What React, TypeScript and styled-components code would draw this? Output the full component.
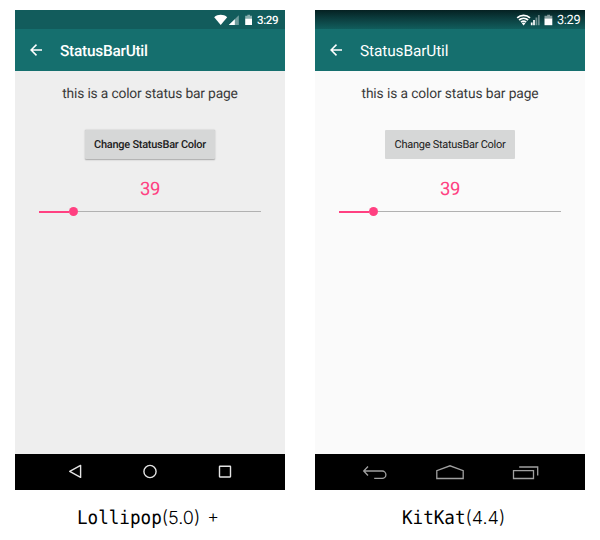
import React from "react";
import styled, { createGlobalStyle, css } from "styled-components";

type Version = "lollipop" | "kitkat";

const GlobalStyle = createGlobalStyle`
  * { box-sizing: border-box; }
  body { margin: 0; background: #fff; text-rendering: geometricPrecision; }
`;

const Page = styled.main`
  width: 600px;
  height: 540px;
  padding: 10px 15px 0;
  display: grid;
  grid-template-columns: 270px 270px;
  column-gap: 30px;
  align-content: start;
  font-family: Roboto, "Liberation Sans", sans-serif;
`;

const Figure = styled.figure`
  margin: 0;
  display: flex;
  flex-direction: column;
`;

const Screen = styled.div<{ $version: Version }>`
  height: 480px;
  display: flex;
  flex-direction: column;
  background: ${(p) => (p.$version === "lollipop" ? "#eeeeee" : "#fafafa")};
`;

const StatusBar = styled.div<{ $version: Version }>`
  height: 19px;
  display: flex;
  align-items: center;
  justify-content: flex-end;
  padding-right: ${(p) => (p.$version === "lollipop" ? 6 : 4)}px;
  color: #fff;
  ${(p) =>
    p.$version === "lollipop"
      ? css`
          background: #125c5c;
        `
      : css`
          background: linear-gradient(#052122, #0b3d3e 45%, #115d5c);
        `}
`;

const Clock = styled.time<{ $version: Version }>`
  width: ${(p) => (p.$version === "lollipop" ? 22 : 24)}px;
  font-size: ${(p) => (p.$version === "lollipop" ? 11.5 : 12.8)}px;
  line-height: 19px;
  letter-spacing: -0.35px;
  font-weight: ${(p) => (p.$version === "lollipop" ? 500 : 400)};
  white-space: nowrap;
  padding-top: ${(p) => (p.$version === "lollipop" ? 1 : 2)}px;
`;

const StatusIcons = styled.svg`
  display: block;
  width: 44px;
  height: 19px;
`;

const AppBar = styled.header`
  height: 42px;
  display: flex;
  align-items: center;
  padding-left: 14px;
  background: #156f6e;
  color: #fff;
`;

const BackArrow = styled.svg`
  width: 14px;
  height: 14px;
  margin-right: 17px;
`;

const Title = styled.h1<{ $version: Version }>`
  margin: 0;
  padding-top: 1px;
  font-size: 15.4px;
  line-height: 20px;
  letter-spacing: ${(p) => (p.$version === "lollipop" ? -0.24 : -0.1)}px;
  font-weight: ${(p) => (p.$version === "lollipop" ? 500 : 400)};
`;

const Content = styled.section`
  flex: 1;
  display: flex;
  flex-direction: column;
  align-items: center;
  padding-top: 13px;
`;

const Message = styled.p<{ $version: Version }>`
  margin: 0;
  font-size: 13.8px;
  line-height: 20px;
  color: #3a3a3a;
  letter-spacing: ${(p) => (p.$version === "lollipop" ? -0.17 : -0.12)}px;
`;

const Button = styled.button<{ $version: Version }>`
  margin: 26px 0 0;
  padding: 0;
  border: 0;
  width: 130px;
  height: 29px;
  background: #d6d7d7;
  font: 500 11px/30px Roboto, sans-serif;
  letter-spacing: -0.27px;
  text-rendering: geometricPrecision;
  color: #212121;
  border-radius: 1px;
  ${(p) =>
    p.$version === "lollipop"
      ? css`
          box-shadow: 0 0.5px 1.5px rgba(0, 0, 0, 0.3);
        `
      : css`
          font-weight: 400;
        `}
`;

const Value = styled.output`
  margin-top: 20px;
  font-size: 18.5px;
  line-height: 21px;
  letter-spacing: -0.4px;
  color: #ff4081;
`;

const Slider = styled.div`
  width: 222px;
  height: 9px;
  margin-top: 7px;
  display: flex;
  align-items: center;
`;

const Progress = styled.div`
  width: 29.5px;
  height: 2px;
  background: #ff4081;
`;

const Thumb = styled.div`
  width: 9px;
  height: 9px;
  border-radius: 50%;
  background: #ff4081;
`;

const Track = styled.div`
  flex: 1;
  height: 1px;
  background: #b1b1b1;
`;

const NavBar = styled.nav`
  height: 36px;
  background: #000;
`;

const NavIcons = styled.svg`
  display: block;
  width: 270px;
  height: 36px;
`;

const Caption = styled.figcaption<{ $version: Version }>`
  display: flex;
  align-items: baseline;
  margin-top: 16px;
  padding-left: ${(p) => (p.$version === "lollipop" ? 62 : 87)}px;
  color: #000;
  line-height: 26px;
  white-space: pre;
`;

const Name = styled.span`
  display: inline-block;
  font: 17.6px/26px "DejaVu Sans Mono", monospace;
  transform: scaleY(1.07);
  transform-origin: 50% 72%;
`;

const Release = styled.span`
  font: 300 18px/26px Inter, "Noto Sans", sans-serif;
  word-spacing: 2px;
`;

const StatusGlyphs = ({ version }: { version: Version }) =>
  version === "lollipop" ? (
    <StatusIcons viewBox="0 0 44 19" fill="#fff">
      <path d="M1.2 7.2C4.8 4 10.6 4 14.2 7.2L7.7 15Z" />
      <path d="M25.8 5.2V15H15.8Z" opacity=".4" />
      <path d="M21.8 9.2V15H15.8Z" />
      <path d="M34.4 4.8h2.6v1h2v3H32.2v-3h2.2Z" opacity=".5" />
      <path d="M32.2 8.6H39V15h-6.8Z" />
    </StatusIcons>
  ) : (
    <StatusIcons viewBox="0 0 44 19" fill="none" stroke="#fff">
      <path d="M4.2 7.8C7.8 4.5 13.4 4.5 17 7.8M6.1 10C8.7 7.7 12.5 7.7 15.1 10M8 12.1C9.6 10.9 11.6 10.9 13.2 12.1" strokeWidth="1.8" />
      <path d="m10.6 15.4-1.8-2.2c1.1-.9 2.5-.9 3.6 0Z" fill="#fff" stroke="none" />
      <path d="M18.7 12.5v2.7M21 10v5.2" strokeWidth="1.7" />
      <path d="M23.4 7.5v7.7M25.8 5v10.2" strokeWidth="1.7" opacity=".4" />
      <path d="M34.2 4.8h2.8v1h2.3v3h-7.8v-3h2.7Z" fill="#fff" stroke="none" opacity=".5" />
      <path d="M31.5 8.5h7.8v6.7h-7.8Z" fill="#fff" stroke="none" />
    </StatusIcons>
  );

const NavGlyphs = ({ version }: { version: Version }) =>
  version === "lollipop" ? (
    <NavIcons viewBox="0 0 270 36" fill="none" stroke="#e4e4e4" strokeWidth="1.4">
      <path d="M65.6 11.4v12L54.7 17.4Z" strokeLinejoin="round" />
      <circle cx="135" cy="17.5" r="6.1" />
      <rect x="204.5" y="12.2" width="11" height="10.8" rx=".4" />
    </NavIcons>
  ) : (
    <NavIcons viewBox="0 0 270 36" fill="none" stroke="#a0a0a0" strokeWidth="1.3">
      <path d="M53 12.5 48.7 17l4.3 4.5M49 17h18.2a3.7 3.7 0 0 1 0 7.4H59.2" />
      <path d="M121.8 24.5v-7.8l13.2-4.9 13.2 4.9v7.8Z" />
      <path d="M198.5 16.7h20v7.8h-20ZM204.2 13h18.5v8.5" />
    </NavIcons>
  );

function Phone({ version, name, release }: { version: Version; name: string; release: string }) {
  return (
    <Figure>
      <Screen $version={version}>
        <StatusBar $version={version}>
          <StatusGlyphs version={version} />
          <Clock $version={version}>3:29</Clock>
        </StatusBar>
        <AppBar>
          <BackArrow viewBox="0 0 14 14" fill="none" stroke="#fff" strokeWidth="1.5">
            <path d="M13 7H2.5M7.5 1.6 2.1 7 7.5 12.4" />
          </BackArrow>
          <Title $version={version}>StatusBarUtil</Title>
        </AppBar>
        <Content>
          <Message $version={version}>this is a color status bar page</Message>
          <Button $version={version}>Change StatusBar Color</Button>
          <Value>39</Value>
          <Slider>
            <Progress />
            <Thumb />
            <Track />
          </Slider>
        </Content>
        <NavBar>
          <NavGlyphs version={version} />
        </NavBar>
      </Screen>
      <Caption $version={version}>
        <Name>{name}</Name>
        <Release>{release}</Release>
      </Caption>
    </Figure>
  );
}

export default function App() {
  return (
    <>
      <GlobalStyle />
      <Page>
        <Phone version="lollipop" name="Lollipop" release="(5.0) +" />
        <Phone version="kitkat" name="KitKat" release="(4.4)" />
      </Page>
    </>
  );
}
